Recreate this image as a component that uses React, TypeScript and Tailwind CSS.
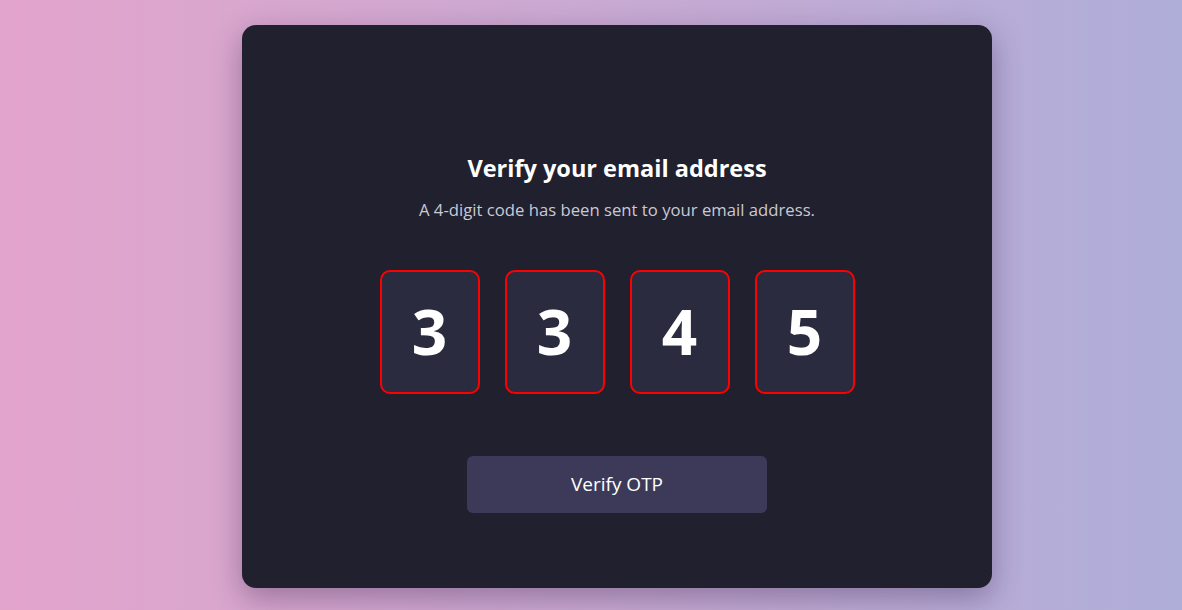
const digits = ["3", "3", "4", "5"];

export default function App() {
  return (
    <div
      className="min-h-screen w-full flex items-center justify-center bg-gradient-to-r from-[#e3a4cc] to-[#aeaed9]"
      style={{ fontFamily: '"Open Sans", "Noto Sans", sans-serif' }}
    >
      <div className="ml-[52px] mt-[2px] w-[750px] h-[563px] rounded-[14px] bg-[#20202f] shadow-[0_10px_30px_rgba(40,20,60,0.35)] flex flex-col items-center pt-[127px]">
        <h1 className="text-[23.5px] leading-[32px] font-bold text-white">Verify your email address</h1>
        <p className="mt-[14px] text-[16.7px] leading-[24px] text-[#c9c9d4]">
          A 4-digit code has been sent to your email address.
        </p>

        {/* OTP boxes */}
        <div className="mt-[48px] flex gap-[25px]">
          {digits.map((d, i) => (
            <div
              key={i}
              className="w-[100px] h-[124px] rounded-[10px] border-2 border-[#ff0000] bg-[#2b2b40] flex items-center justify-center text-white text-[62px] font-bold"
            >
              {d}
            </div>
          ))}
        </div>

        <button className="mt-[62px] w-[300px] h-[57px] rounded-[6px] bg-[#3c3a58] text-white text-[19px]">
          Verify OTP
        </button>
      </div>
    </div>
  );
}
